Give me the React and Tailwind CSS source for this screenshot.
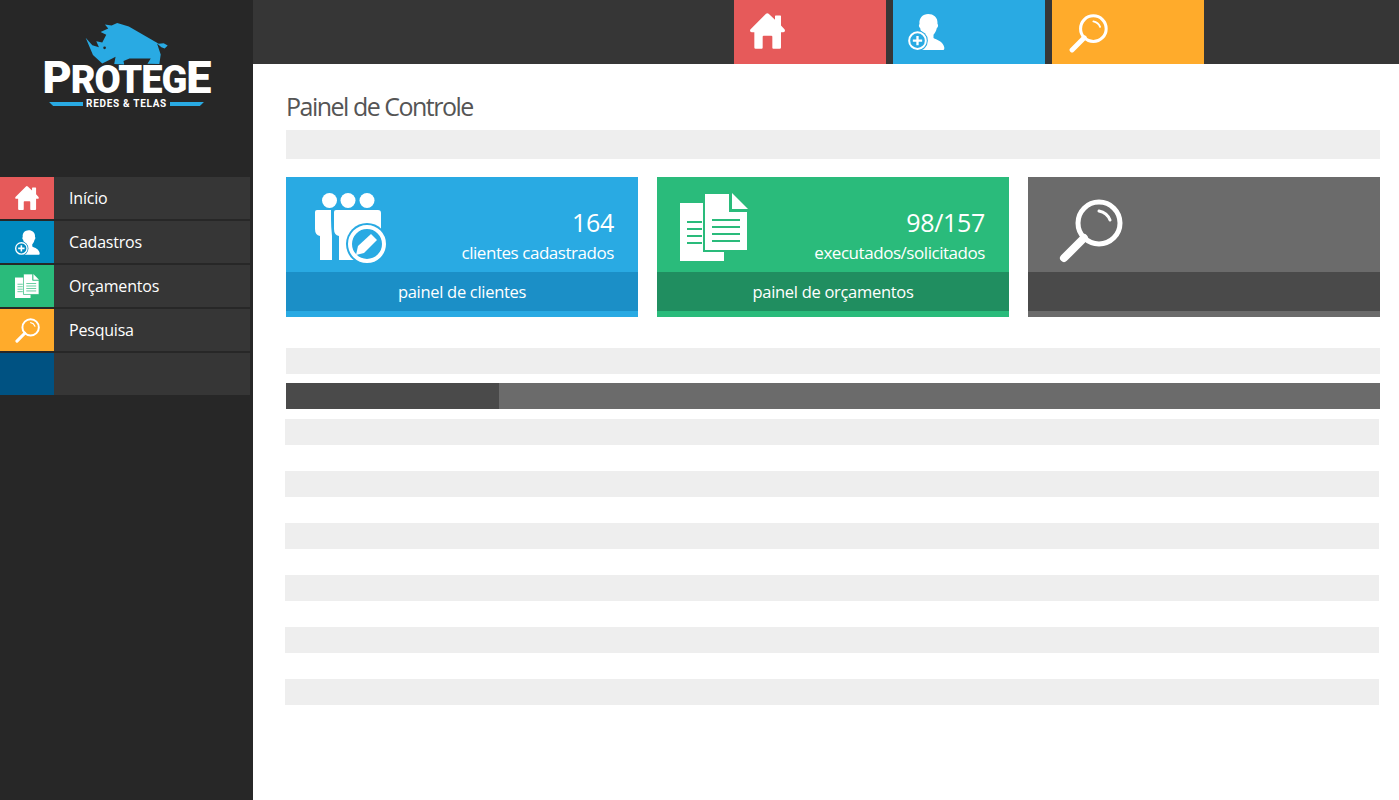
import { Fragment } from 'react';

const font = { fontFamily: '"Open Sans", "Noto Sans", sans-serif' };

const HomeIcon = ({ className }) => (
  <svg viewBox="0 0 105 107" className={className} fill="white">
    <path d="M48 2 Q52 -1 56 2 L75 20 L75 9 Q75 7 77 7 L91 7 Q93 7 93 9 L93 37 L104 49 Q107 57 100 57 L93 57 L93 103 Q93 107 89 107 L70 107 Q67 107 67 104 L67 71 Q67 68 64 68 L41 68 Q38 68 38 71 L38 104 Q38 107 35 107 L17 107 Q13 107 13 103 L13 57 L5 57 Q-2 57 1 49 Z" />
  </svg>
);

const UserAddIcon = ({ className, bg }) => (
  <svg viewBox="0 0 110 108" className={className}>
    <path fill="white" d="M34 30 C32 12 44 0 60 0 C76 0 90 10 88 30 C91 32 90 40 86 42 C84 52 80 58 76 62 L76 72 C86 78 100 80 106 94 C109 100 110 106 106 108 L40 108 L40 60 L46 62 C40 56 37 50 36 42 C32 40 31 33 34 30 Z" />
    <circle cx="28" cy="80" r="31" fill={bg} />
    <circle cx="28" cy="80" r="25" fill="none" stroke="white" strokeWidth="6" />
    <path d="M28 66 V94 M14 80 H42" stroke="white" strokeWidth="7" />
  </svg>
);

const SearchIcon = ({ className }) => (
  <svg viewBox="0 0 64 64" className={className} fill="none" stroke="white">
    <circle cx="40" cy="24" r="21" strokeWidth="5" />
    <path d="M25 39 L5 59" strokeWidth="8" strokeLinecap="round" />
    <path d="M40 12 C45 13 49 16 51 21" strokeWidth="3" strokeLinecap="round" />
  </svg>
);

const DocsIcon = ({ className, bg }) => (
  <svg viewBox="0 0 68 68" className={className}>
    <path fill="white" d="M0 10 H44 V68 H0 Z" />
    <path fill="white" stroke={bg} strokeWidth="2" d="M24 0 H50 V18 H68 V58 H24 Z" />
    <path fill="white" d="M52 0 L68 16 H52 Z" />
    <path d="M7 29 H22 M7 36 H22 M7 43 H22 M7 50 H22 M32 27 H60 M32 34 H60 M32 41 H60 M32 48 H60" stroke={bg} strokeWidth="2" />
  </svg>
);

// tres pessoas + circulo com lapis
const GroupIcon = ({ className, bg }) => (
  <svg viewBox="0 0 72 72" className={className}>
    <g fill="white">
      <circle cx="14.5" cy="7.5" r="7.5" />
      <circle cx="33" cy="7.5" r="7.5" />
      <circle cx="52" cy="7.5" r="7.5" />
      <path d="M2 17 H16 V26 Q16 34 17 43 V67 H5 V43 Q0 42 0 36 V19 Q0 17 2 17 Z" />
      <path d="M21 17 H63 Q66 17 66 20 V42 L50 67 H24 V43 Q19 42 19 36 V19 Q19 17 21 17 Z" />
    </g>
    <circle cx="52" cy="51" r="21" fill={bg} />
    <circle cx="52" cy="51" r="17" fill="none" stroke="white" strokeWidth="4" />
    <path fill="white" d="M41 62 L43 53 L56 41 L62 47 L49 60 Z" />
  </svg>
);

const Rhino = () => (
  <svg viewBox="245 58 256 134" className="w-[85px] h-[45px]">
    <path fill="#29aae3" d="M250 108 L270 130 L290 136 L282 118 L300 122 L312 99 L295 90 L318 80 L308 68 L328 71 L345 63 L380 74 L470 126 L485 124 L497 131 L488 140 L478 136 L465 125 L476 158 L472 187 L436 186 L446 170 L382 170 L364 178 L366 188 L336 187 L340 165 L330 170 L300 185 L272 160 Z" />
    <circle cx="307" cy="138" r="4" fill="#272727" />
  </svg>
);

const Logo = () => (
  <div className="flex flex-col items-center pt-[21px] h-[177px]">
    <Rhino />
    <div className="flex items-baseline h-[32px] -mt-[4px] leading-[32px] text-white font-black tracking-[-1px]" style={{ fontFamily: 'Roboto, sans-serif' }}>
      <span className="text-[45px]">P</span>
      <span className="text-[38px]">ROTEG</span>
      <span className="text-[45px]">E</span>
    </div>
    <div className="flex items-center gap-[3px] mt-[5px]">
      <span className="w-[34px] h-[4px] bg-[#29aae3] [clip-path:polygon(0_0,100%_0,100%_100%,12%_100%)]" />
      <span className="text-white text-[10px] leading-[10px] font-bold tracking-[0.7px]" style={{ fontFamily: 'Roboto, sans-serif' }}>REDES &amp; TELAS</span>
      <span className="w-[34px] h-[4px] bg-[#29aae3] [clip-path:polygon(0_0,100%_0,88%_100%,0_100%)]" />
    </div>
  </div>
);

const menu = [
  { label: 'Início', bg: 'bg-[#e65a5a]', icon: <HomeIcon className="w-[24px] h-[24px]" /> },
  { label: 'Cadastros', bg: 'bg-[#008ac0]', icon: <UserAddIcon bg="#008ac0" className="w-[25px] h-[25px]" /> },
  { label: 'Orçamentos', bg: 'bg-[#2abb7b]', icon: <DocsIcon bg="#2abb7b" className="w-[24px] h-[24px]" /> },
  { label: 'Pesquisa', bg: 'bg-[#ffab2b]', icon: <SearchIcon className="w-[25px] h-[25px]" /> },
  { label: '', bg: 'bg-[#005282]', icon: null },
];

const Sidebar = () => (
  <aside className="w-[253px] shrink-0 bg-[#272727]">
    <Logo />
    <nav className="flex flex-col gap-[2px] w-[250px]">
      {menu.map((item, i) => (
        <div key={i} className="flex h-[42px] bg-[#363636]">
          <div className={`w-[54px] flex items-center justify-center ${item.bg}`}>{item.icon}</div>
          <span className="pl-[15px] leading-[42px] text-[16px] text-white tracking-[-0.2px]">{item.label}</span>
        </div>
      ))}
    </nav>
  </aside>
);

const TopTile = ({ bg, children }) => (
  <div className={`w-[152px] h-[64px] flex items-center pl-[16px] ${bg}`}>{children}</div>
);

const Topbar = () => (
  <header className="h-[64px] bg-[#363636] flex gap-[7px] pl-[481px]">
    <TopTile bg="bg-[#e65a5a]"><HomeIcon className="w-[35px] h-[36px] -mt-[2px]" /></TopTile>
    <TopTile bg="bg-[#29aae3]"><UserAddIcon bg="#29aae3" className="w-[37px] h-[36px] -mt-[0px] -ml-[1px]" /></TopTile>
    <TopTile bg="bg-[#ffab2b]"><SearchIcon className="w-[39px] h-[39px] mt-[2px] ml-[1px]" /></TopTile>
  </header>
);

const Card = ({ bg, dark, icon, value, label, link }) => (
  <div className={`h-[140px] flex-1 flex flex-col ${bg}`}>
    <div className="h-[95px] flex justify-between">
      {icon}
      <div className="text-right text-white pt-[27px] pr-[24px]">
        <div className="text-[25px] leading-[36px] tracking-[-0.3px]">{value}</div>
        <div className="text-[17px] leading-[24px] tracking-[-0.45px] mt-[1px]">{label}</div>
      </div>
    </div>
    <div className={`h-[39px] text-center text-white text-[16.5px] leading-[39px] tracking-[-0.3px] ${dark}`}>{link}</div>
  </div>
);

const Main = () => (
  <main className="flex-1 bg-white">
    <Topbar />
    <div className="pl-[33px] pr-[19px]">
      <h1 className="pt-[26px] h-[66px] text-[25px] leading-[32px] tracking-[-1.5px] text-[#555555]">Painel de Controle</h1>
      <div className="h-[29px] bg-[#eeeeee]" />
      <div className="flex gap-[19px] mt-[18px]">
        <Card bg="bg-[#29aae3]" dark="bg-[#1b8fc7]" value="164" label="clientes cadastrados" link="painel de clientes"
          icon={<GroupIcon bg="#29aae3" className="w-[72px] h-[72px] mt-[16px] ml-[29px]" />} />
        <Card bg="bg-[#2abb7b]" dark="bg-[#208e60]" value="98/157" label="executados/solicitados" link="painel de orçamentos"
          icon={<DocsIcon bg="#2abb7b" className="w-[68px] h-[68px] mt-[16px] ml-[23px]" />} />
        <Card bg="bg-[#6b6b6b]" dark="bg-[#4a4a4a]" value="" label="" link=""
          icon={<SearchIcon className="w-[64px] h-[64px] mt-[22px] ml-[31px]" />} />
      </div>
      <div className="h-[26px] bg-[#eeeeee] mt-[31px]" />
      <div className="h-[26px] bg-[#6b6b6b] mt-[9px]">
        <div className="h-full w-[213px] bg-[#4a4a4a]" />
      </div>
      <div className="flex flex-col gap-[26px] mt-[10px] -mx-[1px] mr-[1px]">
        {[0, 1, 2, 3, 4, 5].map((n) => (
          <Fragment key={n}>
            <div className="h-[26px] bg-[#eeeeee]" />
          </Fragment>
        ))}
      </div>
    </div>
  </main>
);

export default function App() {
  return (
    <div className="flex min-h-[800px] w-[1399px]" style={font}>
      <Sidebar />
      <Main />
    </div>
  );
}
